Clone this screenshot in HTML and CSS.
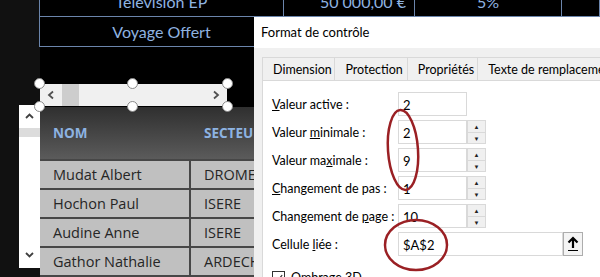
FILE: index.html
```html
<!DOCTYPE html>
<html lang="fr">
<head>
    <meta charset="UTF-8">
    <meta name="viewport" content="width=device-width, initial-scale=1.0">
    <title>Format de contrôle</title>
    <link rel="stylesheet" href="styles.css">
</head>
<body>
    <div class="screen">
        <div class="gutter"></div>

        <div class="sheet">
            <table class="kpi">
                <tr>
                    <td class="kpi-name">Television EP</td>
                    <td class="kpi-value">50 000,00 €</td>
                    <td class="kpi-rate">5%</td>
                    <td></td>
                </tr>
                <tr>
                    <td class="kpi-name">Voyage Offert</td>
                    <td></td>
                    <td></td>
                    <td></td>
                </tr>
            </table>

            <div class="sheet-gap"></div>

            <div class="people">
                <div class="people-row people-head">
                    <div class="col-name">NOM</div>
                    <div>SECTEUR</div>
                </div>
                <div class="people-row"><div class="col-name">Mudat Albert</div><div>DROME</div></div>
                <div class="people-row"><div class="col-name">Hochon Paul</div><div>ISERE</div></div>
                <div class="people-row"><div class="col-name">Audine Anne</div><div>ISERE</div></div>
                <div class="people-row"><div class="col-name">Gathor Nathalie</div><div>ARDECHE</div></div>
            </div>
        </div>

        <!-- barre de défilement verticale (contrôle de formulaire) -->
        <div class="vscroll">
            <span class="vscroll-arrow">
                <svg width="9" height="6" viewBox="0 0 9 6"><path d="M1 5 L4.5 1.5 L8 5" fill="none" stroke="#404040" stroke-width="1.8"/></svg>
            </span>
            <div class="vscroll-thumb"></div>
            <span class="vscroll-arrow down">
                <svg width="9" height="6" viewBox="0 0 9 6"><path d="M1 1 L4.5 4.5 L8 1" fill="none" stroke="#404040" stroke-width="1.8"/></svg>
            </span>
        </div>

        <!-- barre de défilement horizontale sélectionnée -->
        <div class="hscroll">
            <span class="hscroll-arrow">
                <svg width="8" height="10" viewBox="0 0 8 10"><path d="M6 1.5 L2 5 L6 8.5" fill="none" stroke="#505050" stroke-width="1.8"/></svg>
            </span>
            <div class="hscroll-thumb"></div>
            <div class="hscroll-track"></div>
            <span class="hscroll-arrow">
                <svg width="8" height="10" viewBox="0 0 8 10"><path d="M2 1.5 L6 5 L2 8.5" fill="none" stroke="#505050" stroke-width="1.8"/></svg>
            </span>
            <span class="handle h-tl"></span>
            <span class="handle h-tm"></span>
            <span class="handle h-tr"></span>
            <span class="handle h-bl"></span>
            <span class="handle h-bm"></span>
            <span class="handle h-br"></span>
        </div>

        <div class="dialog">
            <div class="dialog-title">Format de contrôle</div>
            <div class="dialog-body">
                <div class="tabs">
                    <div class="tab t1">Dimension</div>
                    <div class="tab t2">Protection</div>
                    <div class="tab t3">Propriétés</div>
                    <div class="tab t4">Texte de remplacement</div>
                </div>
                <div class="panel">
                    <div class="field">
                        <label><u>V</u>aleur active :</label>
                        <div class="box">2</div>
                    </div>
                    <div class="field">
                        <label>Valeur <u>m</u>inimale :</label>
                        <div class="box">2</div>
                        <div class="spin"><span>&#9650;</span><span>&#9660;</span></div>
                    </div>
                    <div class="field">
                        <label>Valeur ma<u>x</u>imale :</label>
                        <div class="box">9</div>
                        <div class="spin"><span>&#9650;</span><span>&#9660;</span></div>
                    </div>
                    <div class="field">
                        <label><u>C</u>hangement de pas :</label>
                        <div class="box">1</div>
                        <div class="spin"><span>&#9650;</span><span>&#9660;</span></div>
                    </div>
                    <div class="field">
                        <label>Changement de <u>p</u>age :</label>
                        <div class="box">10</div>
                        <div class="spin"><span>&#9650;</span><span>&#9660;</span></div>
                    </div>
                    <div class="field">
                        <label>Cellule <u>l</u>iée :</label>
                        <div class="box box-wide">$A$2</div>
                        <div class="pick">
                            <svg width="12" height="16" viewBox="0 0 12 16"><path d="M6 2 V12 M1.5 6.5 L6 2 L10.5 6.5" fill="none" stroke="#000" stroke-width="2.2"/><path d="M1 14.5 H11" stroke="#000" stroke-width="1"/></svg>
                        </div>
                    </div>
                    <div class="check-row">
                        <span class="check">
                            <svg width="12" height="12" viewBox="0 0 12 12"><path d="M2 6.5 L4.8 9.2 L10 2.8" fill="none" stroke="#333" stroke-width="1.3"/></svg>
                        </span>
                        <span><u>O</u>mbrage 3D</span>
                    </div>
                </div>
            </div>
        </div>

        <svg class="marks" width="600" height="277" viewBox="0 0 600 277">
            <ellipse cx="403" cy="150" rx="15" ry="40" transform="rotate(-4 403 150)" fill="none" stroke="#9a2024" stroke-width="2.5"/>
            <ellipse cx="416" cy="245" rx="31" ry="25" fill="none" stroke="#9a2024" stroke-width="2.5"/>
        </svg>
    </div>
</body>
</html>
```

FILE: styles.css
```css
body {
    margin: 0;
    background: #000;
}

.screen {
    position: relative;
    display: flex;
    width: 600px;
    height: 277px;
    overflow: hidden;
    background: #000;
    font-family: "Open Sans", sans-serif;
}

.gutter {
    width: 40px;
    flex: none;
    background: #111;
}

.sheet {
    flex: 1;
    display: flex;
    flex-direction: column;
}

/* tableau du haut */
.kpi {
    border-collapse: collapse;
    margin-top: -14px;
    margin-left: -1px;
}

.kpi td {
    height: 29px;
    padding: 0;
    border: 1px solid #6b85ab;
    color: #8fb3e0;
    font-family: Lato, sans-serif;
    font-size: 16px;
    text-align: center;
}

.kpi-name {
    width: 243px;
}

.kpi td.kpi-value {
    width: 122px;
    text-align: right;
    padding-right: 8px;
}

.kpi-rate {
    width: 146px;
}

.sheet-gap {
    height: 60px;
    flex: none;
}

/* tableau des commerciaux */
.people {
    width: 320px;
    flex: none;
}

.people-row {
    display: grid;
    grid-template-columns: 151px 1fr;
    height: 29px;
    background: #c0c0c0;
    color: #262626;
    font-size: 14.5px;
    border-bottom: 2px solid #474747;
    box-sizing: border-box;
}

.people-row > div {
    display: flex;
    align-items: center;
    padding-left: 13px;
}

.people-row .col-name {
    border-right: 2px solid #474747;
}

.people .people-head {
    height: 54px;
    background: linear-gradient(#2f2f2f, #5b5b5b);
    color: #8db3e2;
    font-size: 13.5px;
    font-weight: bold;
}

.people-head .col-name {
    border-right: none;
}

/* barre verticale */
.vscroll {
    position: absolute;
    left: 19px;
    top: 105px;
    width: 21px;
    height: 163px;
    background: #fff;
    display: flex;
    flex-direction: column;
    align-items: center;
}

.vscroll-arrow {
    display: flex;
    height: 6px;
    margin-top: 8px;
}

.vscroll-arrow.down {
    margin-top: auto;
    margin-bottom: 10px;
}

.vscroll-thumb {
    width: 21px;
    height: 9px;
    margin-top: 9px;
    background: #dcdcdc;
}

/* barre horizontale */
.hscroll {
    position: absolute;
    left: 40px;
    top: 84px;
    width: 187px;
    height: 22px;
    background: #f0f0f0;
    display: flex;
    align-items: center;
}

.hscroll-arrow {
    width: 22px;
    display: flex;
    justify-content: center;
}

.hscroll-thumb {
    width: 17px;
    height: 22px;
    background: #cdcdcd;
}

.hscroll-track {
    flex: 1;
}

.handle {
    position: absolute;
    width: 9px;
    height: 9px;
    border-radius: 50%;
    background: #fff;
    border: 1.5px solid #8a8a8a;
}

.h-tl { left: -6px; top: -6px; }
.h-tm { left: 87px; top: -6px; }
.h-tr { right: -6px; top: -6px; }
.h-bl { left: -6px; bottom: -6px; }
.h-bm { left: 87px; bottom: -6px; }
.h-br { right: -6px; bottom: -6px; }

/* boîte de dialogue */
.dialog {
    position: absolute;
    left: 254px;
    top: 17px;
    width: 360px;
    height: 280px;
    background: #f0f0f0;
    font-family: Lato, sans-serif;
    font-size: 12.5px;
    color: #000;
}

.dialog-title {
    height: 31px;
    padding-left: 7px;
    background: #fff;
    font-size: 13px;
    line-height: 31px;
}

.dialog-body {
    padding: 9px 0 0 8px;
}

.tabs {
    display: flex;
    height: 23px;
}

.tab {
    box-sizing: border-box;
    height: 23px;
    line-height: 24px;
    padding-left: 10px;
    border: 1px solid #d9d9d9;
    border-bottom: none;
    border-right: none;
    background: #f0f0f0;
    white-space: nowrap;
    overflow: hidden;
}

.t1 { width: 74px; }
.t2 { width: 74px; }
.t3 { width: 72px; }
.t4 { width: 140px; }

.panel {
    background: #fff;
    border-left: 1px solid #d9d9d9;
    border-top: 1px solid #d9d9d9;
    height: 200px;
    padding: 11px 0 0 9px;
}

.field {
    display: flex;
    align-items: center;
    height: 24px;
    margin-bottom: 4px;
}

.field label {
    width: 126px;
    white-space: nowrap;
}

.box {
    box-sizing: border-box;
    width: 69px;
    height: 24px;
    border: 1px solid #d9d9d9;
    padding: 4px 0 0 4px;
    font-size: 13px;
}

.box-wide {
    width: 165px;
}

.spin {
    box-sizing: border-box;
    width: 19px;
    height: 24px;
    border: 1px solid #d9d9d9;
    background: #f0f0f0;
    display: flex;
    flex-direction: column;
}

.spin span {
    flex: 1;
    font-size: 6px;
    line-height: 11px;
    text-align: center;
    color: #222;
}

.spin span + span {
    border-top: 1px solid #d9d9d9;
}

.pick {
    box-sizing: border-box;
    width: 20px;
    height: 24px;
    border: 1px solid #adadad;
    background: #f4f4f4;
    display: flex;
    align-items: center;
    justify-content: center;
}

.check-row {
    display: flex;
    align-items: center;
    gap: 6px;
    margin-top: 14px;
}

.check {
    box-sizing: border-box;
    width: 13px;
    height: 13px;
    border: 1px solid #333;
    display: flex;
    align-items: center;
    justify-content: center;
}

.marks {
    position: absolute;
    left: 0;
    top: 0;
    pointer-events: none;
}
```
